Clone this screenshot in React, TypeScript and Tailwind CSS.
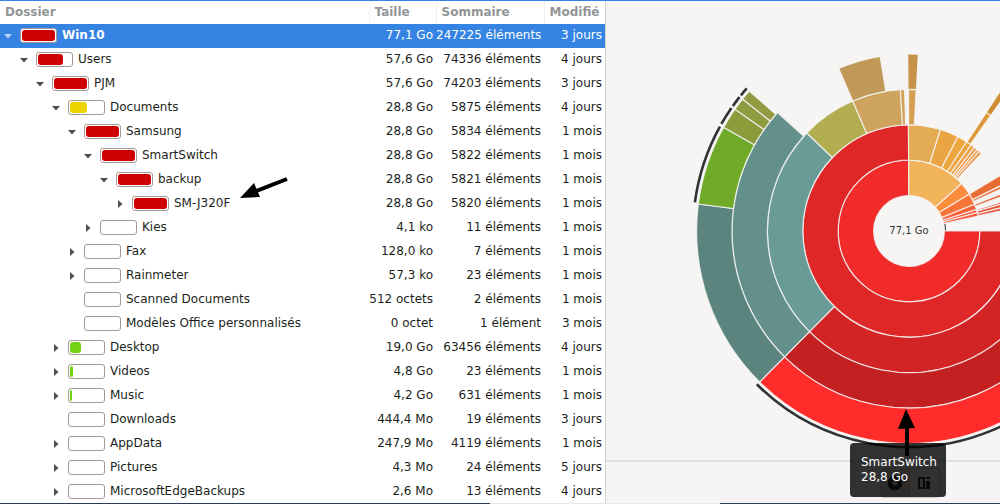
import React from "react";

type Folder = {
  name: string;
  depth: number;
  state: "open" | "closed" | "leaf";
  fill: number;
  size: string;
  items: string;
  modified: string;
};

const folders: Folder[] = [
  { name: "Win10", depth: 0, state: "open", fill: 100, size: "77,1 Go", items: "247225 éléments", modified: "3 jours" },
  { name: "Users", depth: 1, state: "open", fill: 75, size: "57,6 Go", items: "74336 éléments", modified: "4 jours" },
  { name: "PJM", depth: 2, state: "open", fill: 100, size: "57,6 Go", items: "74203 éléments", modified: "3 jours" },
  { name: "Documents", depth: 3, state: "open", fill: 50, size: "28,8 Go", items: "5875 éléments", modified: "4 jours" },
  { name: "Samsung", depth: 4, state: "open", fill: 100, size: "28,8 Go", items: "5834 éléments", modified: "1 mois" },
  { name: "SmartSwitch", depth: 5, state: "open", fill: 100, size: "28,8 Go", items: "5822 éléments", modified: "1 mois" },
  { name: "backup", depth: 6, state: "open", fill: 100, size: "28,8 Go", items: "5821 éléments", modified: "1 mois" },
  { name: "SM-J320F", depth: 7, state: "closed", fill: 100, size: "28,8 Go", items: "5820 éléments", modified: "1 mois" },
  { name: "Kies", depth: 5, state: "closed", fill: 0, size: "4,1 ko", items: "11 éléments", modified: "1 mois" },
  { name: "Fax", depth: 4, state: "closed", fill: 0, size: "128,0 ko", items: "7 éléments", modified: "1 mois" },
  { name: "Rainmeter", depth: 4, state: "closed", fill: 0, size: "57,3 ko", items: "23 éléments", modified: "1 mois" },
  { name: "Scanned Documents", depth: 4, state: "leaf", fill: 0, size: "512 octets", items: "2 éléments", modified: "1 mois" },
  { name: "Modèles Office personnalisés", depth: 4, state: "leaf", fill: 0, size: "0 octet", items: "1 élément", modified: "3 mois" },
  { name: "Desktop", depth: 3, state: "closed", fill: 32, size: "19,0 Go", items: "63456 éléments", modified: "4 jours" },
  { name: "Videos", depth: 3, state: "closed", fill: 8, size: "4,8 Go", items: "23 éléments", modified: "1 mois" },
  { name: "Music", depth: 3, state: "closed", fill: 7, size: "4,2 Go", items: "631 éléments", modified: "1 mois" },
  { name: "Downloads", depth: 3, state: "leaf", fill: 0, size: "444,4 Mo", items: "19 éléments", modified: "3 jours" },
  { name: "AppData", depth: 3, state: "closed", fill: 0, size: "247,9 Mo", items: "4119 éléments", modified: "1 mois" },
  { name: "Pictures", depth: 3, state: "closed", fill: 0, size: "4,3 Mo", items: "24 éléments", modified: "5 jours" },
  { name: "MicrosoftEdgeBackups", depth: 3, state: "closed", fill: 0, size: "2,6 Mo", items: "13 éléments", modified: "4 jours" },
];

// [ring, start angle, end angle, color], degrees clockwise from the right
const segments: [number, number, number, string][] = [
  [1, 0, 269.7, "#f02b2a"],
  [1, 269.7, 318, "#f1b45b"],
  [1, 318, 328.6, "#fc8c3b"],
  [1, 328.6, 337.8, "#f87537"],
  [1, 337.8, 342.4, "#f96236"],
  [1, 342.4, 345, "#f95a35"],
  [1, 345, 347.9, "#f95335"],
  [2, 0, 269.7, "#e02727"],
  [2, 269.7, 287.2, "#e3ab54"],
  [2, 287.2, 297.4, "#eaa543"],
  [2, 297.4, 302.8, "#eda53d"],
  [2, 302.8, 305.8, "#eda43f"],
  [2, 305.8, 308.1, "#eea043"],
  [2, 308.1, 309.9, "#ee9a42"],
  [2, 309.9, 311.4, "#ee9642"],
  [2, 311.4, 313, "#ee9140"],
  [2, 328.6, 333.6, "#e86d34"],
  [2, 333.8, 335.4, "#e86935"],
  [2, 338, 339.6, "#e85f35"],
  [2, 342.5, 343.7, "#e75635"],
  [2, 343.7, 345.8, "#e75335"],
  [2, 345.9, 347.6, "#e75035"],
  [3, 0, 134.7, "#d22424"],
  [3, 134.7, 223.8, "#6a9b96"],
  [3, 223.8, 246.6, "#b2ae50"],
  [3, 246.6, 266.5, "#cea35e"],
  [3, 266.5, 268.2, "#d1a157"],
  [3, 269.8, 272.9, "#d49f50"],
  [3, 303.1, 305.3, "#dd9838"],
  [4, 0, 134.7, "#c32121"],
  [4, 134.7, 222, "#63908b"],
  [4, 246.6, 260.6, "#c09958"],
  [4, 269.6, 273, "#c69348"],
  [4, 303.1, 305.3, "#ce8c33"],
  [5, 0, 134.7, "#ff2c2b"],
  [5, 134.7, 187.3, "#5c847f"],
  [5, 187.3, 209.2, "#6fab29"],
  [5, 209.2, 215, "#8a9d3a"],
  [5, 215, 218.4, "#8e9b3e"],
  [5, 218.4, 221.2, "#929a42"],
];

// folders that still have hidden children get a dark rim
const rims: [number, number, number][] = [
  [216, 0, 134.8],
  [216, 187.6, 208.9],
  [216, 209.7, 214.7],
  [216, 215.4, 218.3],
  [216, 218.9, 221.3],
];

const CX = 303;
const CY = 230;
const RING = 35.4;

const point = (r: number, deg: number) => {
  const a = (deg * Math.PI) / 180;
  return `${(CX + r * Math.cos(a)).toFixed(2)} ${(CY + r * Math.sin(a)).toFixed(2)}`;
};

const arc = (r: number, from: number, to: number) =>
  `M${point(r, from)} A${r} ${r} 0 ${to - from > 180 ? 1 : 0} 1 ${point(r, to)}`;

const wedge = (ring: number, from: number, to: number) => {
  const inner = ring * RING;
  const outer = inner + RING;
  const large = to - from > 180 ? 1 : 0;
  return `${arc(outer, from, to)} L${point(inner, to)} A${inner} ${inner} 0 ${large} 0 ${point(inner, from)} Z`;
};

const fillColor = (fill: number) => {
  if (fill > 66) return "bg-[#cc0000]";
  if (fill > 33) return "bg-[#edd400]";
  return "bg-[#73d216]";
};

const Expander = ({ folder }: { folder: Folder }) => {
  if (folder.state === "leaf") return <span className="w-4 shrink-0" />;
  return (
    <button
      type="button"
      aria-label={folder.name}
      aria-expanded={folder.state === "open"}
      className="flex w-4 shrink-0 items-center justify-center"
    >
      <svg width="10" height="10" viewBox="0 0 10 10" fill="currentColor">
        {folder.state === "open" ? <path d="M1 3h8L5 7.500z" /> : <path d="M3 1v8l4.500-4z" />}
      </svg>
    </button>
  );
};

const FolderRow = ({ folder, selected }: { folder: Folder; selected: boolean }) => {
  return (
    <tr className={selected ? "h-6 bg-[#3584e4] text-white" : "h-6 text-[#1c1f20]"}>
      <td className="p-0 pb-px">
        <div className="flex items-center" style={{ paddingLeft: folder.depth * 16 }}>
          <span className={selected ? "flex text-[#b9d5f6]" : "flex text-[#4d5152]"}>
            <Expander folder={folder} />
          </span>
          <span className="ml-1 flex h-[15px] w-[37px] shrink-0 rounded-[3px] border border-[#a39b95] bg-white p-px">
            {folder.fill > 0 && (
              <span
                className={`block rounded-[3px] ${fillColor(folder.fill)}`}
                style={{ width: `${folder.fill}%` }}
              />
            )}
          </span>
          <span className={selected ? "ml-[5px] font-bold" : "ml-[5px]"}>{folder.name}</span>
        </div>
      </td>
      <td className="p-0 pr-[3px] pb-px text-right">{folder.size}</td>
      <td className="p-0 pr-[3px] pb-px text-right">{folder.items}</td>
      <td className="p-0 pr-[3px] pb-px text-right">{folder.modified}</td>
    </tr>
  );
};

const FolderTable = () => {
  return (
    <div className="relative w-[60.6%] shrink-0 overflow-hidden border-r border-[#d5d2cf] bg-white">
      <table className="w-full table-fixed border-collapse whitespace-nowrap text-xs leading-[15px]">
        <thead>
          <tr className="h-[23px] text-left text-[#929595]">
            <th className="p-0 pl-[5px]">Dossier</th>
            <th className="w-[67px] border-l border-[#f0f0f0] p-0 pl-[5px]">Taille</th>
            <th className="w-[108px] border-l border-[#f0f0f0] p-0 pl-[5px]">Sommaire</th>
            <th className="w-[61px] border-l border-[#f0f0f0] p-0 pl-[5px]">Modifié</th>
          </tr>
        </thead>
        <tbody>
          {folders.map((folder, index) => (
            <FolderRow key={folder.name} folder={folder} selected={index === 0} />
          ))}
        </tbody>
      </table>
      {/* annotation arrow on SM-J320F */}
      <svg className="absolute left-[236px] top-[171px]" width="56" height="32" viewBox="0 0 56 32">
        <path d="M51 7L18 20" stroke="#000" strokeWidth="4" />
        <path d="M4 26L18 11L24 25z" fill="#000" />
      </svg>
    </div>
  );
};

const RingsChart = () => {
  return (
    <svg className="shrink-0" width="607" height="459" viewBox="0 0 607 459">
      {segments.map(([ring, from, to, color], index) => (
        <path
          key={index}
          d={wedge(ring, from, to)}
          fill={color}
          stroke="#f6f5f4"
          strokeWidth="1.2"
          strokeOpacity="0.85"
        />
      ))}
      {rims.map(([r, from, to], index) => (
        <path key={index} d={arc(r, from, to)} fill="none" stroke="#2e3436" strokeWidth="2.6" />
      ))}
      <path d={arc(36.5, 349, 359)} fill="none" stroke="#2e3436" />
      <text x="303" y="233" textAnchor="middle" fontSize="10" fill="#2e3436">
        77,1 Go
      </text>
    </svg>
  );
};

const ChartPane = () => {
  return (
    <div className="relative min-w-0 flex-1 overflow-hidden">
      <div className="flex h-full w-[607px] flex-col">
        <RingsChart />
        <div className="flex flex-1 items-center justify-center border-t-2 border-[#e2e0de]">
          <button
            type="button"
            aria-label="Graphique en anneaux"
            className="flex h-[30px] w-[30px] items-center justify-center rounded-l border border-[#cdc7c2] bg-[#dedbd8]"
          >
            <svg width="16" height="16" viewBox="0 0 16 16" fill="none" stroke="#2e3436">
              <circle cx="8" cy="8" r="5" strokeWidth="5" />
            </svg>
          </button>
          <button
            type="button"
            aria-label="Graphique en arborescence"
            className="flex h-[30px] w-[30px] items-center justify-center rounded-r border border-l-0 border-[#cdc7c2] bg-[#f6f5f4]"
          >
            <svg width="16" height="16" viewBox="0 0 16 16" fill="#2e3436">
              <path d="M2 2h7v12H2zM4 4v8h3V4z" fillRule="evenodd" />
              <path d="M10 2h4v2h-4zM10 6h4v8h-4z" />
            </svg>
          </button>
        </div>
      </div>
      <div
        role="tooltip"
        className="absolute left-[244px] top-[442px] rounded bg-black/80 py-3 pr-[9px] pl-[11px] text-xs leading-[15px] text-white"
      >
        SmartSwitch
        <br />
        28,8 Go
      </div>
      {/* annotation arrow on the SmartSwitch ring */}
      <svg className="absolute left-[290px] top-[405px]" width="22" height="52" viewBox="0 0 22 52">
        <path d="M11 20V50" stroke="#000" strokeWidth="4" />
        <path d="M10 3L2 23L19 22z" fill="#000" />
      </svg>
    </div>
  );
};

const App = () => {
  return (
    <div className="flex h-screen flex-col overflow-hidden bg-[#f6f5f4] font-['DejaVu_Sans',sans-serif] text-xs">
      <div className="h-px shrink-0 bg-[#3584e4]" />
      <div className="flex min-h-0 flex-1">
        <FolderTable />
        <ChartPane />
      </div>
      {/* edge of the window behind */}
      <div className="flex h-px shrink-0 bg-[#2b3b5c]">
        <div className="ml-[49%] w-[23%] bg-[#e8e6e4]" />
      </div>
    </div>
  );
};

export default App;
